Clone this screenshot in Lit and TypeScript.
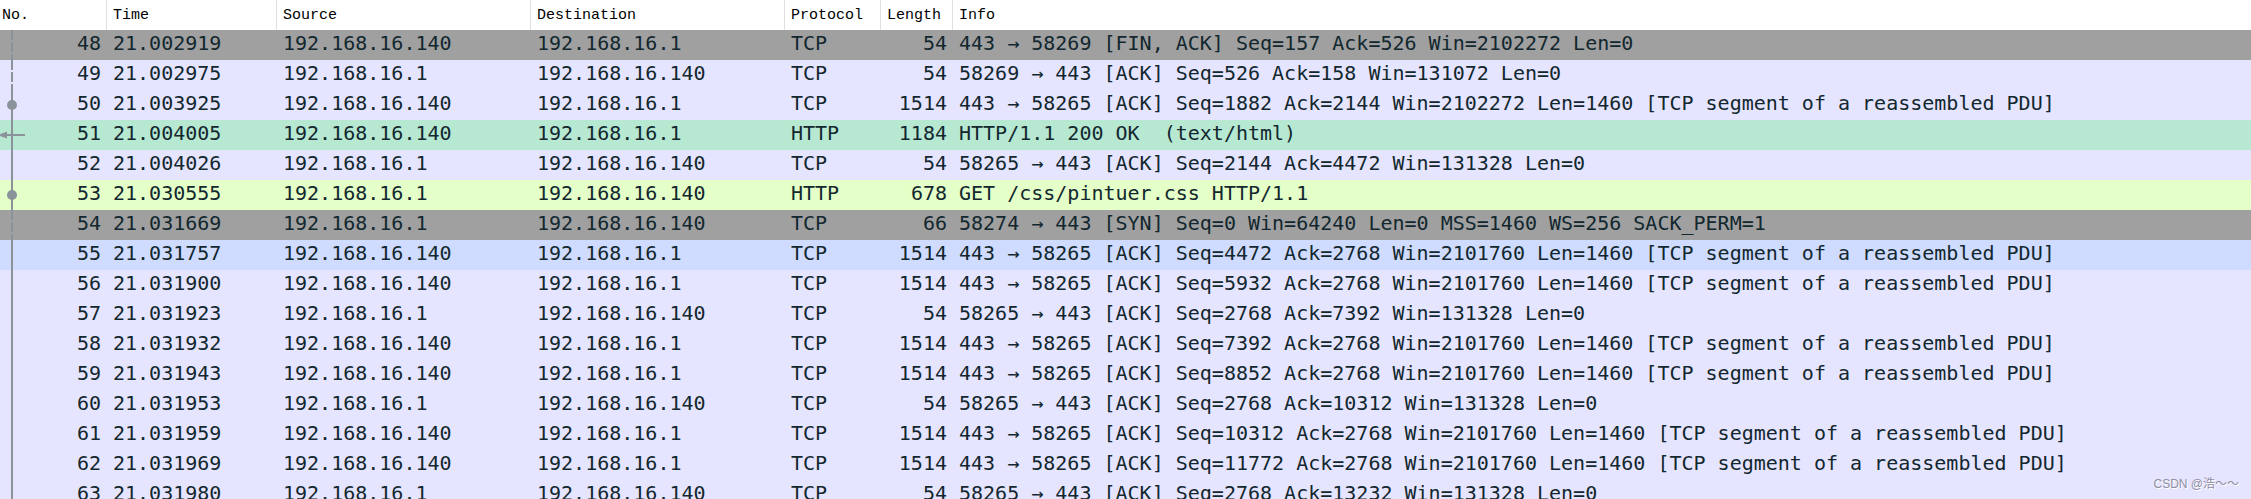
import { LitElement, html, svg, css } from "lit";
import { customElement, property, state } from "lit/decorators.js";
import { classMap } from "lit/directives/class-map.js";

type Tone = "plain" | "gray" | "http" | "selected" | "hover";
type Mark = "dashed" | "line" | "dot" | "arrow";

interface Packet {
  no: number;
  time: string;
  src: string;
  dst: string;
  proto: string;
  len: number;
  info: string;
  tone: Tone;
  mark: Mark;
}

const SERVER = "192.168.16.1";
const CLIENT = "192.168.16.140";
const PDU = "[TCP segment of a reassembled PDU]";

const packet = (
  no: number,
  time: string,
  fromClient: boolean,
  proto: string,
  len: number,
  info: string,
  tone: Tone = "plain",
  mark: Mark = "line",
): Packet => ({
  no,
  time,
  src: fromClient ? CLIENT : SERVER,
  dst: fromClient ? SERVER : CLIENT,
  proto,
  len,
  info,
  tone,
  mark,
});

const segment = (seq: number) =>
  `443 → 58265 [ACK] Seq=${seq} Ack=2768 Win=2101760 Len=1460 ${PDU}`;
const ack = (n: number) =>
  `58265 → 443 [ACK] Seq=2768 Ack=${n} Win=131328 Len=0`;

const PACKETS: Packet[] = [
  packet(48, "21.002919", true, "TCP", 54, "443 → 58269 [FIN, ACK] Seq=157 Ack=526 Win=2102272 Len=0", "gray", "dashed"),
  packet(49, "21.002975", false, "TCP", 54, "58269 → 443 [ACK] Seq=526 Ack=158 Win=131072 Len=0", "plain", "dashed"),
  packet(50, "21.003925", true, "TCP", 1514, `443 → 58265 [ACK] Seq=1882 Ack=2144 Win=2102272 Len=1460 ${PDU}`, "plain", "dot"),
  packet(51, "21.004005", true, "HTTP", 1184, "HTTP/1.1 200 OK  (text/html)", "selected", "arrow"),
  packet(52, "21.004026", false, "TCP", 54, "58265 → 443 [ACK] Seq=2144 Ack=4472 Win=131328 Len=0"),
  packet(53, "21.030555", false, "HTTP", 678, "GET /css/pintuer.css HTTP/1.1", "http", "dot"),
  packet(54, "21.031669", false, "TCP", 66, "58274 → 443 [SYN] Seq=0 Win=64240 Len=0 MSS=1460 WS=256 SACK_PERM=1", "gray", "dashed"),
  packet(55, "21.031757", true, "TCP", 1514, segment(4472), "hover"),
  packet(56, "21.031900", true, "TCP", 1514, segment(5932)),
  packet(57, "21.031923", false, "TCP", 54, ack(7392)),
  packet(58, "21.031932", true, "TCP", 1514, segment(7392)),
  packet(59, "21.031943", true, "TCP", 1514, segment(8852)),
  packet(60, "21.031953", false, "TCP", 54, ack(10312)),
  packet(61, "21.031959", true, "TCP", 1514, segment(10312)),
  packet(62, "21.031969", true, "TCP", 1514, segment(11772)),
  packet(63, "21.031980", false, "TCP", 54, ack(13232)),
];

@customElement("stream-mark")
export class StreamMark extends LitElement {
  @property() kind: Mark = "line";

  static styles = css`
    :host {
      display: block;
      width: 26px;
      height: 30px;
    }
    .mark {
      display: block;
      fill: #8a9399;
      stroke: #8a9399;
    }
    .stem {
      stroke-width: 2;
    }
    .head {
      stroke: none;
    }
  `;

  render() {
    return html`<svg class="mark" width="26" height="30" viewBox="0 0 26 30" aria-hidden="true">
      <line class="stem" x1="12" y1="0" x2="12" y2="30"
        stroke-dasharray=${this.kind === "dashed" ? "10 2" : "none"}></line>
      ${this.kind === "dot" ? svg`<circle class="head" cx="12" cy="15" r="5"></circle>` : ""}
      ${this.kind === "arrow"
        ? svg`<line class="stem" x1="6" y1="15" x2="25" y2="15"></line>
              <path class="head" d="M-1 14.5 L7 11.5 V18.5 L-1 15.5 Z"></path>`
        : ""}
    </svg>`;
  }
}

@customElement("app-root")
export class AppRoot extends LitElement {
  @state() private packets = PACKETS;

  static styles = css`
    :host {
      display: block;
      position: relative;
      height: 100vh;
      overflow: hidden;
      background: #e6e5ff;
    }
    .packets {
      width: 100%;
      table-layout: fixed;
      border-collapse: separate;
      border-spacing: 0;
      color: #12272e;
      font: 20px/26px "DejaVu Sans Mono", monospace;
      white-space: pre;
    }
    .c-no { width: 107px; }
    .c-time { width: 170px; }
    .c-src { width: 254px; }
    .c-dst { width: 254px; }
    .c-proto { width: 96px; }
    .c-len { width: 72px; }
    .head {
      box-sizing: border-box;
      height: 30px;
      padding: 2px 0 0 6px;
      border-right: 1px solid #e0e0e0;
      background: #fff;
      color: #000;
      font: 15px/28px "Liberation Mono", monospace;
      text-align: left;
    }
    .head:first-child { padding-left: 2px; }
    .head:last-child { border-right: 0; }
    .cell {
      box-sizing: border-box;
      height: 30px;
      padding: 0 6px 4px;
      overflow: hidden;
    }
    .first {
      padding-left: 0;
      padding-bottom: 0;
    }
    .num { text-align: right; }
    .mark-row {
      display: flex;
      justify-content: space-between;
    }
    .plain { background: #e6e5ff; }
    .gray { background: #a0a0a0; }
    .http { background: #e4ffc7; }
    .selected { background: #b7e8d2; }
    .hover { background: #cfdcff; }
    .watermark {
      position: absolute;
      right: 12px;
      bottom: 6px;
      color: #8f8e9f;
      font: 12px/18px "Liberation Sans", "Noto Sans CJK SC", sans-serif;
      text-shadow: 1px 1px 0 #fff;
    }
  `;

  render() {
    return html`
      <table class="packets">
        <colgroup>
          <col class="c-no" /><col class="c-time" /><col class="c-src" /><col class="c-dst" />
          <col class="c-proto" /><col class="c-len" /><col />
        </colgroup>
        <thead>
          <tr>
            ${["No.", "Time", "Source", "Destination", "Protocol", "Length", "Info"].map(
              (name) => html`<th class="head" scope="col">${name}</th>`,
            )}
          </tr>
        </thead>
        <tbody>
          ${this.packets.map(
            (p) => html`<tr class=${classMap({ [p.tone]: true })}>
              <td class="cell first"><div class="mark-row"><stream-mark .kind=${p.mark}></stream-mark><span>${p.no}</span></div></td>
              <td class="cell">${p.time}</td>
              <td class="cell">${p.src}</td>
              <td class="cell">${p.dst}</td>
              <td class="cell">${p.proto}</td>
              <td class="cell num">${p.len}</td>
              <td class="cell">${p.info}</td>
            </tr>`,
          )}
        </tbody>
      </table>
      <div class="watermark">CSDN @浩～～</div>
    `;
  }
}
